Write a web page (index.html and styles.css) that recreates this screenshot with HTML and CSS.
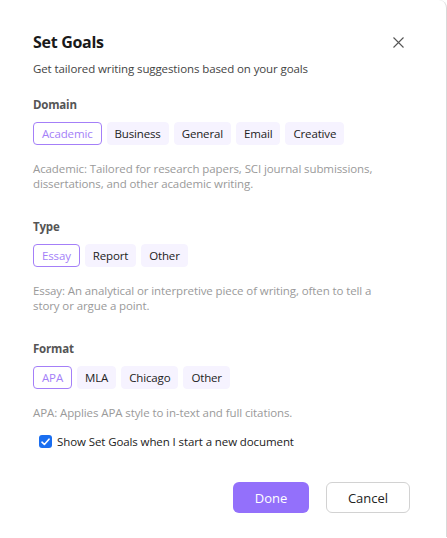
FILE: index.html
```html
<!DOCTYPE html>
<html>
<head>
<meta charset="utf-8">
<link rel="stylesheet" href="styles.css">
</head>
<body>
<div class="dialog">
  <div class="header">
    <h1 class="title">Set Goals</h1>
    <button class="close" aria-label="Close">
      <svg width="11" height="11" viewBox="0 0 11 11"><path d="M0.5 0.5L10.5 10.5M10.5 0.5L0.5 10.5" stroke="#555" stroke-width="1.1" fill="none"/></svg>
    </button>
  </div>
  <p class="subtitle">Get tailored writing suggestions based on your goals</p>

  <section class="group">
    <h2 class="label">Domain</h2>
    <div class="chips">
      <span class="chip active">Academic</span>
      <span class="chip">Business</span>
      <span class="chip">General</span>
      <span class="chip">Email</span>
      <span class="chip">Creative</span>
    </div>
    <p class="desc">Academic: Tailored for research papers, SCI journal submissions, dissertations, and other academic writing.</p>
  </section>

  <section class="group">
    <h2 class="label">Type</h2>
    <div class="chips">
      <span class="chip active">Essay</span>
      <span class="chip">Report</span>
      <span class="chip">Other</span>
    </div>
    <p class="desc">Essay: An analytical or interpretive piece of writing, often to tell a story or argue a point.</p>
  </section>

  <section class="group">
    <h2 class="label">Format</h2>
    <div class="chips">
      <span class="chip active">APA</span>
      <span class="chip">MLA</span>
      <span class="chip">Chicago</span>
      <span class="chip">Other</span>
    </div>
    <p class="desc">APA: Applies APA style to in-text and full citations.</p>
  </section>

  <label class="check">
    <span class="box"><svg width="9" height="8" viewBox="0 0 9 8"><path d="M1 4.2L3.4 6.5L8 1.2" stroke="#fff" stroke-width="1.6" fill="none" stroke-linecap="round" stroke-linejoin="round"/></svg></span>
    <span>Show Set Goals when I start a new document</span>
  </label>

  <div class="actions">
    <button class="btn primary">Done</button>
    <button class="btn secondary">Cancel</button>
  </div>
</div>
</body>
</html>
```

FILE: styles.css
```css
html, body {
  margin: 0;
  padding: 0;
  background: #ffffff;
}
body {
  font-family: "Open Sans", "Noto Sans", sans-serif;
  color: #1f1f1f;
}
.dialog {
  box-sizing: border-box;
  width: 447px;
  height: 537px;
  background: #fff;
  border-right: 1px solid #d9d9d9;
  border-top-right-radius: 8px;
  padding: 30px 0 0 33px;
  position: relative;
}
.header {
  display: flex;
  align-items: center;
  justify-content: space-between;
  padding-right: 42px;
}
.title {
  margin: 0;
  font-size: 16px;
  letter-spacing: -0.3px;
  font-weight: 700;
  line-height: 24px;
  color: #1a1a1a;
}
.close {
  border: 0;
  background: none;
  padding: 0;
  width: 11px;
  height: 11px;
  display: flex;
}
.subtitle {
  margin: 7px 0 0;
  font-size: 11.5px;
  letter-spacing: -0.1px;
  line-height: 16px;
  color: #444;
}
.group {
  margin-top: 20px;
}
.group + .group {
  margin-top: 28px;
}
.label {
  margin: 0;
  font-size: 11.5px;
  letter-spacing: -0.2px;
  font-weight: 700;
  line-height: 16px;
  color: #555;
}
.chips {
  display: flex;
  gap: 5px;
  margin-top: 9px;
}
.chip {
  box-sizing: border-box;
  height: 23px;
  padding: 0 7px;
  display: flex;
  align-items: center;
  font-size: 11.5px;
  letter-spacing: -0.15px;
  color: #222;
  background: #f6f3ff;
  border: 1px solid #f6f3ff;
  border-radius: 4px;
}
.chip.active {
  padding: 0 8px;
  background: #fff;
  border-color: #a47ff8;
  color: #a47ff8;
}
.desc {
  margin: 16px 0 0;
  width: 360px;
  font-size: 11.5px;
  letter-spacing: -0.1px;
  line-height: 15px;
  color: #9a9a9a;
}
.check {
  display: flex;
  align-items: center;
  gap: 5px;
  margin: 14px 0 0 6px;
  font-size: 11.5px;
  letter-spacing: -0.1px;
  color: #222;
}
.box {
  width: 13px;
  height: 13px;
  border-radius: 3px;
  background: #1a6ef0;
  display: flex;
  align-items: center;
  justify-content: center;
}
.actions {
  display: flex;
  justify-content: flex-end;
  gap: 17px;
  margin-top: 33px;
  padding-right: 36px;
}
.btn {
  box-sizing: border-box;
  height: 31px;
  border-radius: 6px;
  font-family: inherit;
  font-size: 13px;
}
.primary {
  width: 76px;
  background: #9370fb;
  border: 0;
  color: #fff;
}
.secondary {
  width: 84px;
  background: #fff;
  border: 1px solid #d2d2d2;
  color: #222;
}
```
